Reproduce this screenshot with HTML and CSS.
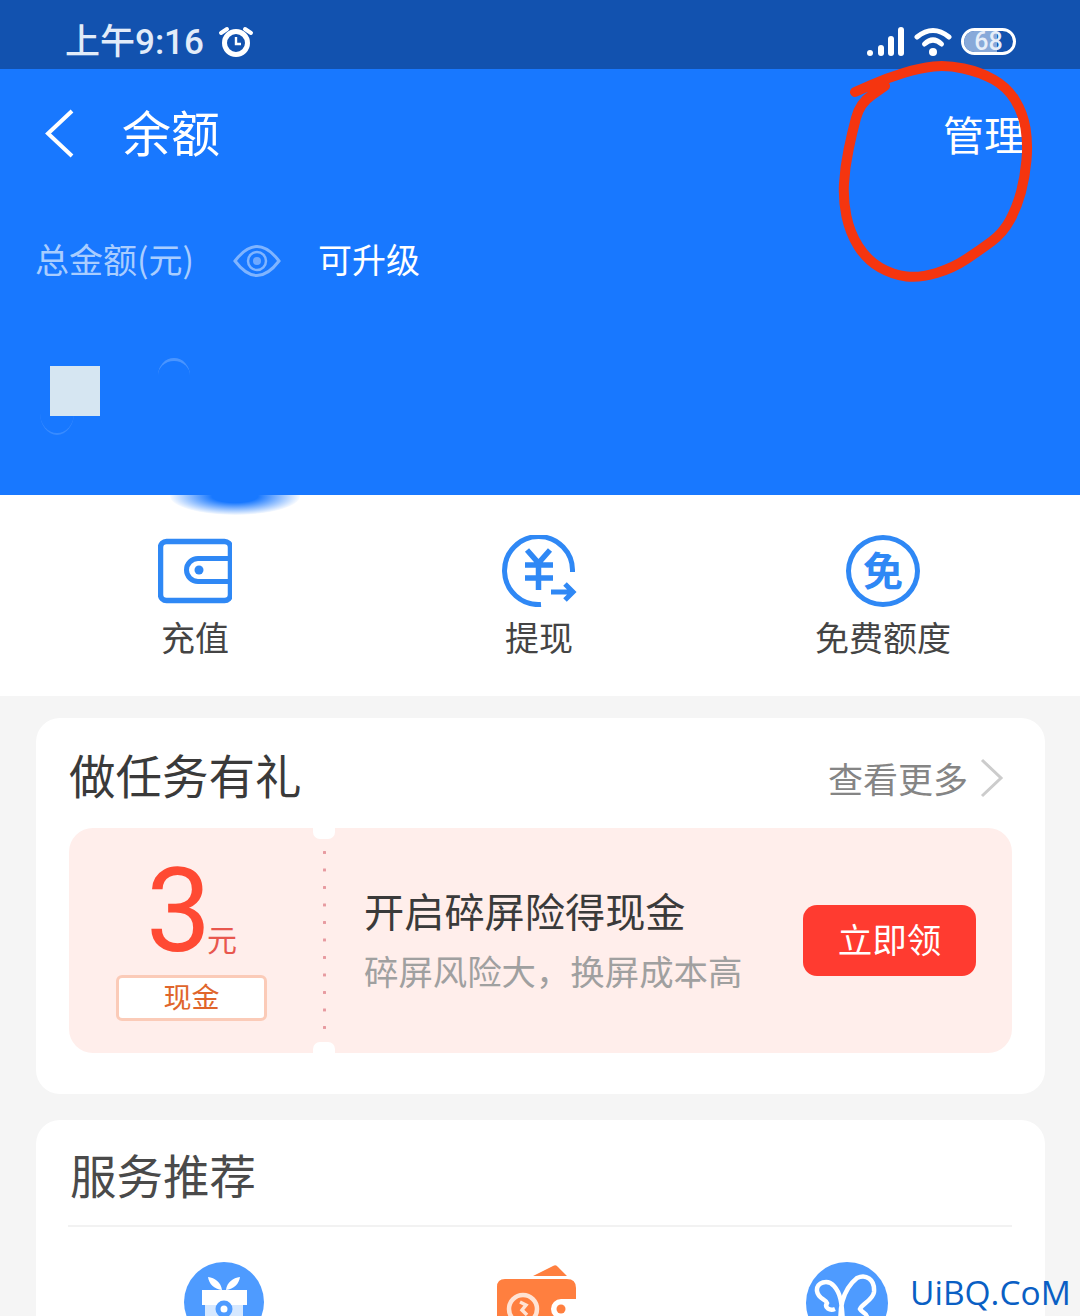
FILE: index.html
```html
<!DOCTYPE html>
<html lang="zh-CN">
<head>
<meta charset="utf-8">
<title>余额</title>
<link rel="stylesheet" href="styles.css">
</head>
<body>
<div class="page">
  <header class="hero">
    <div class="status">
      <div class="status-left">
        <span class="time">上午9:16</span>
        <svg class="alarm" viewBox="0 0 36 32" width="36" height="32"><circle cx="18" cy="17" r="11.500" fill="none" stroke="#fff" stroke-width="5"/><path d="M18 11v7h5" fill="none" stroke="#fff" stroke-width="2.400"/><path d="M3 7l6-4M33 7l-6-4" stroke="#fff" stroke-width="4" stroke-linecap="round"/></svg>
      </div>
      <div class="status-right">
        <svg viewBox="0 0 38 30" width="38" height="30"><g fill="#fff"><circle cx="3" cy="26" r="3"/><rect x="11" y="18" width="6" height="11" rx="3"/><rect x="21" y="9" width="6" height="20" rx="3"/><rect x="31" y="0" width="6" height="29" rx="3"/></g></svg>
        <svg viewBox="0 0 38 30" width="38" height="30"><path d="M3 10Q19-3 35 10" fill="none" stroke="#fff" stroke-width="5" stroke-linecap="round"/><path d="M10.500 17Q19 9 27.500 17" fill="none" stroke="#fff" stroke-width="5" stroke-linecap="round"/><circle cx="19" cy="25" r="4" fill="#fff"/></svg>
        <div class="battery"><span class="battery-fill"></span><span class="battery-num">68</span></div>
      </div>
    </div>
    <div class="nav">
      <svg class="back" viewBox="0 0 32 50" width="32" height="50"><path d="M28 2L4 24.500L28 47" fill="none" stroke="#fff" stroke-width="4"/></svg>
      <h1 class="nav-title">余额</h1>
      <span class="nav-action">管理</span>
    </div>
    <div class="total">
      <span class="total-label">总金额(元)</span>
      <svg class="eye" viewBox="0 0 48 38" width="48" height="38"><path d="M2 19Q24-10 46 19Q24 48 2 19Z" fill="none" stroke="#7FB4FF" stroke-width="3"/><circle cx="24" cy="19" r="9" fill="none" stroke="#7FB4FF" stroke-width="2.500"/><circle cx="24" cy="19" r="4" fill="#6FA9FF"/></svg>
      <span class="total-upgrade">可升级</span>
    </div>
    <div class="amount"><span class="amount-mask"></span></div>
  </header>

  <section class="actions">
    <div class="smudge"></div>
    <div class="action">
      <svg viewBox="0 0 74 64" width="74" height="64"><rect x="2.500" y="2.500" width="70" height="59" rx="6" fill="none" stroke="#2F88F5" stroke-width="5.500"/><path d="M71 19.500H40a11.500 11.500 0 0 0 0 23H71" fill="none" stroke="#2F88F5" stroke-width="5"/><circle cx="41" cy="31" r="4.500" fill="#2F88F5"/></svg>
      <span class="action-label">充值</span>
    </div>
    <div class="action">
      <svg viewBox="0 0 76 72" width="76" height="72"><path d="M71.500 37A34 34 0 1 0 40 69.500" fill="none" stroke="#2F88F5" stroke-width="5"/><path d="M26 15L37.500 28L49 15M24 30H52M24 43H52M37.500 28V55" fill="none" stroke="#2F88F5" stroke-width="5.500"/><path d="M50 57H71M64 49L72 57L64 65" fill="none" stroke="#2F88F5" stroke-width="5"/></svg>
      <span class="action-label">提现</span>
    </div>
    <div class="action">
      <div class="free-badge">免</div>
      <span class="action-label">免费额度</span>
    </div>
  </section>

  <main class="content">
    <section class="card task-card">
      <div class="card-head">
        <h2 class="card-title">做任务有礼</h2>
        <div class="more">
          <span>查看更多</span>
          <svg viewBox="0 0 24 40" width="24" height="40"><path d="M2 2L21 20L2 38" fill="none" stroke="#CCCCCC" stroke-width="3"/></svg>
        </div>
      </div>
      <div class="coupon">
        <div class="coupon-left">
          <div class="value"><span class="value-num">3</span><span class="value-unit">元</span></div>
          <div class="tag">现金</div>
        </div>
        <div class="perforation"><i class="notch notch-top"></i><i class="notch notch-bottom"></i></div>
        <div class="coupon-body">
          <div class="coupon-title">开启碎屏险得现金</div>
          <div class="coupon-sub">碎屏风险大，换屏成本高</div>
        </div>
        <div class="coupon-btn">立即领</div>
      </div>
    </section>

    <section class="card service-card">
      <h2 class="card-title service-title">服务推荐</h2>
      <div class="services">
        <svg class="svc" viewBox="0 0 80 80" width="80" height="80"><circle cx="40" cy="40" r="40" fill="#4E9BFF"/><path d="M38 28C30 27 25 22 24 15C31 16 37 20 38 28ZM42 28C50 27 55 22 56 15C49 16 43 20 42 28Z" fill="#fff"/><rect x="18" y="28" width="45" height="15" fill="#fff"/><rect x="21" y="43" width="38" height="30" fill="#D6E8FF"/><circle cx="40" cy="47" r="6" fill="#fff" stroke="#4E9BFF" stroke-width="5"/></svg>
        <svg class="svc" viewBox="0 0 80 80" width="80" height="80"><path d="M37 14L57 4Q60 2 62 5L71 14Z" fill="#FF7F3F"/><path d="M9 17H71Q80 17 80 26V37H65a10 10 0 0 0 0 20H80V80H1V25Q1 17 9 17Z" fill="#FF7F3F"/><circle cx="27" cy="47" r="14" fill="none" stroke="#FFE3D4" stroke-width="4.500"/><path d="M24 40L30 43L26 48L31 53" fill="none" stroke="#FFE3D4" stroke-width="3.500"/><circle cx="65" cy="47" r="4.500" fill="#FF7F3F"/></svg>
        <svg class="svc" viewBox="0 0 82 82" width="82" height="82"><circle cx="41" cy="41" r="41" fill="#4E9BFF"/><path d="M38 66C35 52 38 35 28 24C22 17 10 20 11 29C12 37 20 37 21 41C18 46 24 49 29 47M36 66C32 50 36 28 51 16C60 12 69 17 68 30C67 38 56 42 54 47C56 51 62 51 61 56C58 62 50 62 44 66" fill="none" stroke="#fff" stroke-width="4.500"/></svg>
      </div>
    </section>
  </main>

  <svg class="scribble" viewBox="0 0 1080 320" width="1080" height="320"><path d="M855 92L871 85Q887 78 903.500 73Q920 68 933.500 66.500Q947 65 963.500 68.500Q980 72 993.500 79.500Q1007 87 1015 100Q1023 113 1025.500 128Q1028 143 1026.500 160Q1025 177 1021 192Q1017 207 1010 220Q1003 233 991.500 241.500Q980 250 966.500 259Q953 268 936.500 273Q920 278 906.500 276.500Q893 275 880 267.500Q867 260 858.500 246.500Q850 233 846.500 216.500Q843 200 844 183.500Q845 167 848.500 150Q852 133 856 118Q860 103 872 95L885 86" fill="none" stroke="#F5350F" stroke-width="10" stroke-linecap="round" stroke-linejoin="round"/></svg>
  <div class="watermark">UiBQ.CoM</div>
</div>
</body>
</html>
```
FILE: styles.css
```css
* { box-sizing: border-box; }
html, body { margin: 0; padding: 0; }
body { font-family: "Noto Sans CJK SC", "Noto Sans", sans-serif; background: #F5F5F5; }
h1, h2 { margin: 0; font-weight: 400; }
.page { position: relative; width: 1080px; height: 1316px; overflow: hidden; background: #F5F5F5; }

.hero { position: relative; z-index: 1; height: 495px; background: #1878FF; display: flex; flex-direction: column; }
.status { height: 69px; background: #1252AF; display: flex; align-items: center; justify-content: space-between; padding: 14px 64px 0 65px; }
.status-left { display: flex; align-items: center; gap: 14px; }
.time { font-family: "Roboto", "Noto Sans CJK SC", sans-serif; font-size: 35px; font-weight: 500; line-height: 40px; color: #E2ECF9; margin-top: 2px; }
.alarm { display: block; }
.status-right { display: flex; align-items: center; gap: 9px; }
.status-right svg { display: block; }
.battery { position: relative; width: 55px; height: 27px; border: 3px solid #fff; border-radius: 14px; overflow: hidden; display: flex; align-items: center; justify-content: center; }
.battery-fill { position: absolute; left: 0; top: 0; bottom: 0; width: 68%; background: #88A9D9; }
.battery-num { position: relative; font-family: "Roboto", sans-serif; font-size: 25px; font-weight: 500; line-height: 21px; color: #E6EEF9; }

.nav { height: 130px; display: flex; align-items: center; padding: 0 55px 0 44px; }
.back { display: block; margin-top: -1px; }
.nav-title { margin-left: 46px; font-size: 49px; line-height: 60px; color: #fff; margin-top: -7px; }
.nav-action { margin-left: auto; font-size: 41px; line-height: 50px; color: #fff; margin-top: -2px; }

.total { display: flex; align-items: center; height: 60px; padding-left: 35px; margin-top: 32px; }
.total-label { font-size: 34px; line-height: 46px; color: #A9CDFF; width: 198px; margin-top: -4px; }
.eye { display: block; }
.total-upgrade { margin-left: 37px; font-size: 34px; line-height: 46px; color: #fff; margin-top: -4px; }

.amount { position: relative; padding: 75px 0 0 50px; }
.amount::before { content: ""; position: absolute; left: 158px; top: 67px; width: 32px; height: 32px; border-radius: 50%; border-top: 3px solid rgba(255,255,255,.22); }
.amount::after { content: ""; position: absolute; left: 40px; top: 100px; width: 34px; height: 42px; border-radius: 50%; border-bottom: 2px solid rgba(255,255,255,.14); }
.amount-mask { display: block; width: 50px; height: 50px; background: #D6E6F2; }

.actions { position: relative; height: 201px; background: #fff; display: grid; grid-template-columns: 195px 344px 344px; padding: 40px 0 0 0; justify-content: start; }
.action { display: flex; flex-direction: column; align-items: center; justify-self: end; width: 200px; margin-right: -100px; }
.action svg { display: block; height: 72px; }
.action-label { margin-top: 5px; font-size: 34px; line-height: 50px; color: #444; white-space: nowrap; }
.free-badge { width: 74px; height: 72px; border: 5px solid #2F88F5; border-radius: 50%; color: #2F88F5; font-size: 40px; line-height: 58px; text-align: center; font-weight: 700; }
.smudge { position: absolute; left: 170px; top: -18px; width: 130px; height: 38px; border-radius: 50%; background: radial-gradient(ellipse at center, #1878FF 25%, rgba(24,120,255,0) 72%); }

.content { display: flex; flex-direction: column; gap: 26px; padding: 22px 35px 0 36px; }
.card { background: #fff; border-radius: 24px; }
.task-card { height: 376px; padding: 0 33px; }
.card-head { display: flex; align-items: center; justify-content: space-between; height: 110px; padding-right: 8px; }
.card-title { font-size: 46.500px; line-height: 60px; color: #3A3A3A; }
.card-head .card-title { margin-top: 1px; }
.more { display: flex; align-items: center; gap: 12px; font-size: 35px; line-height: 46px; color: #858585; margin-top: 10px; }
.more svg { display: block; }

.coupon { height: 225px; background: #FFEEEB; border-radius: 24px; display: flex; align-items: center; }
.coupon-left { width: 244px; flex: none; display: flex; flex-direction: column; align-items: center; padding-left: 1px; }
.value { display: flex; align-items: baseline; height: 100px; }
.value-num { font-family: "Roboto", sans-serif; font-size: 116px; line-height: 100px; color: #FF4A33; }
.value-unit { margin-left: -4px; font-size: 30px; line-height: 36px; color: #E8574E; }
.tag { width: 151px; height: 46px; margin-top: 14px; background: #fff; border: 3px solid #FBCBB8; border-radius: 6px; font-size: 28px; line-height: 37px; text-align: center; color: #E0652B; }
.perforation { position: relative; width: 0; height: 225px; flex: none; margin-left: 10px; }
.perforation::before { content: ""; position: absolute; left: 0; top: 23px; width: 3px; height: 180px; background: radial-gradient(circle at 1.500px 1.500px, #E79AA0 1.400px, transparent 1.600px) 0 0 / 3px 17.500px repeat-y; }
.notch { position: absolute; left: -10px; width: 22px; height: 11px; background: #fff; }
.notch-top { top: 0; border-radius: 0 0 7px 7px; }
.notch-bottom { bottom: 0; border-radius: 7px 7px 0 0; }
.coupon-body { margin-left: 41px; width: 439px; flex: none; margin-top: -5px; }
.coupon-title { font-size: 40.200px; line-height: 52px; color: #3A3A3A; white-space: nowrap; }
.coupon-sub { margin-top: 11px; font-size: 34.400px; line-height: 46px; color: #A0A0A0; white-space: nowrap; }
.coupon-btn { width: 173px; height: 71px; background: #FF3B30; border-radius: 14px; font-size: 34.500px; line-height: 66px; text-align: center; color: #fff; flex: none; }

.service-card { height: 260px; padding: 0 33px; }
.service-title { height: 107px; line-height: 107px; color: #4A4A4A; border-bottom: 2px solid #F2F2F2; margin-left: -1px; padding-left: 2px; }
.services { display: grid; grid-template-columns: 312px 310px 82px; padding: 35px 0 0 115px; }
.svc { display: block; }

.scribble { position: absolute; left: 0; top: 0; z-index: 2; pointer-events: none; }
.watermark { position: absolute; left: 910px; top: 1270px; z-index: 3; font-family: "Open Sans", sans-serif; font-size: 33.500px; line-height: 44px; color: #0A5FC4; }
```
